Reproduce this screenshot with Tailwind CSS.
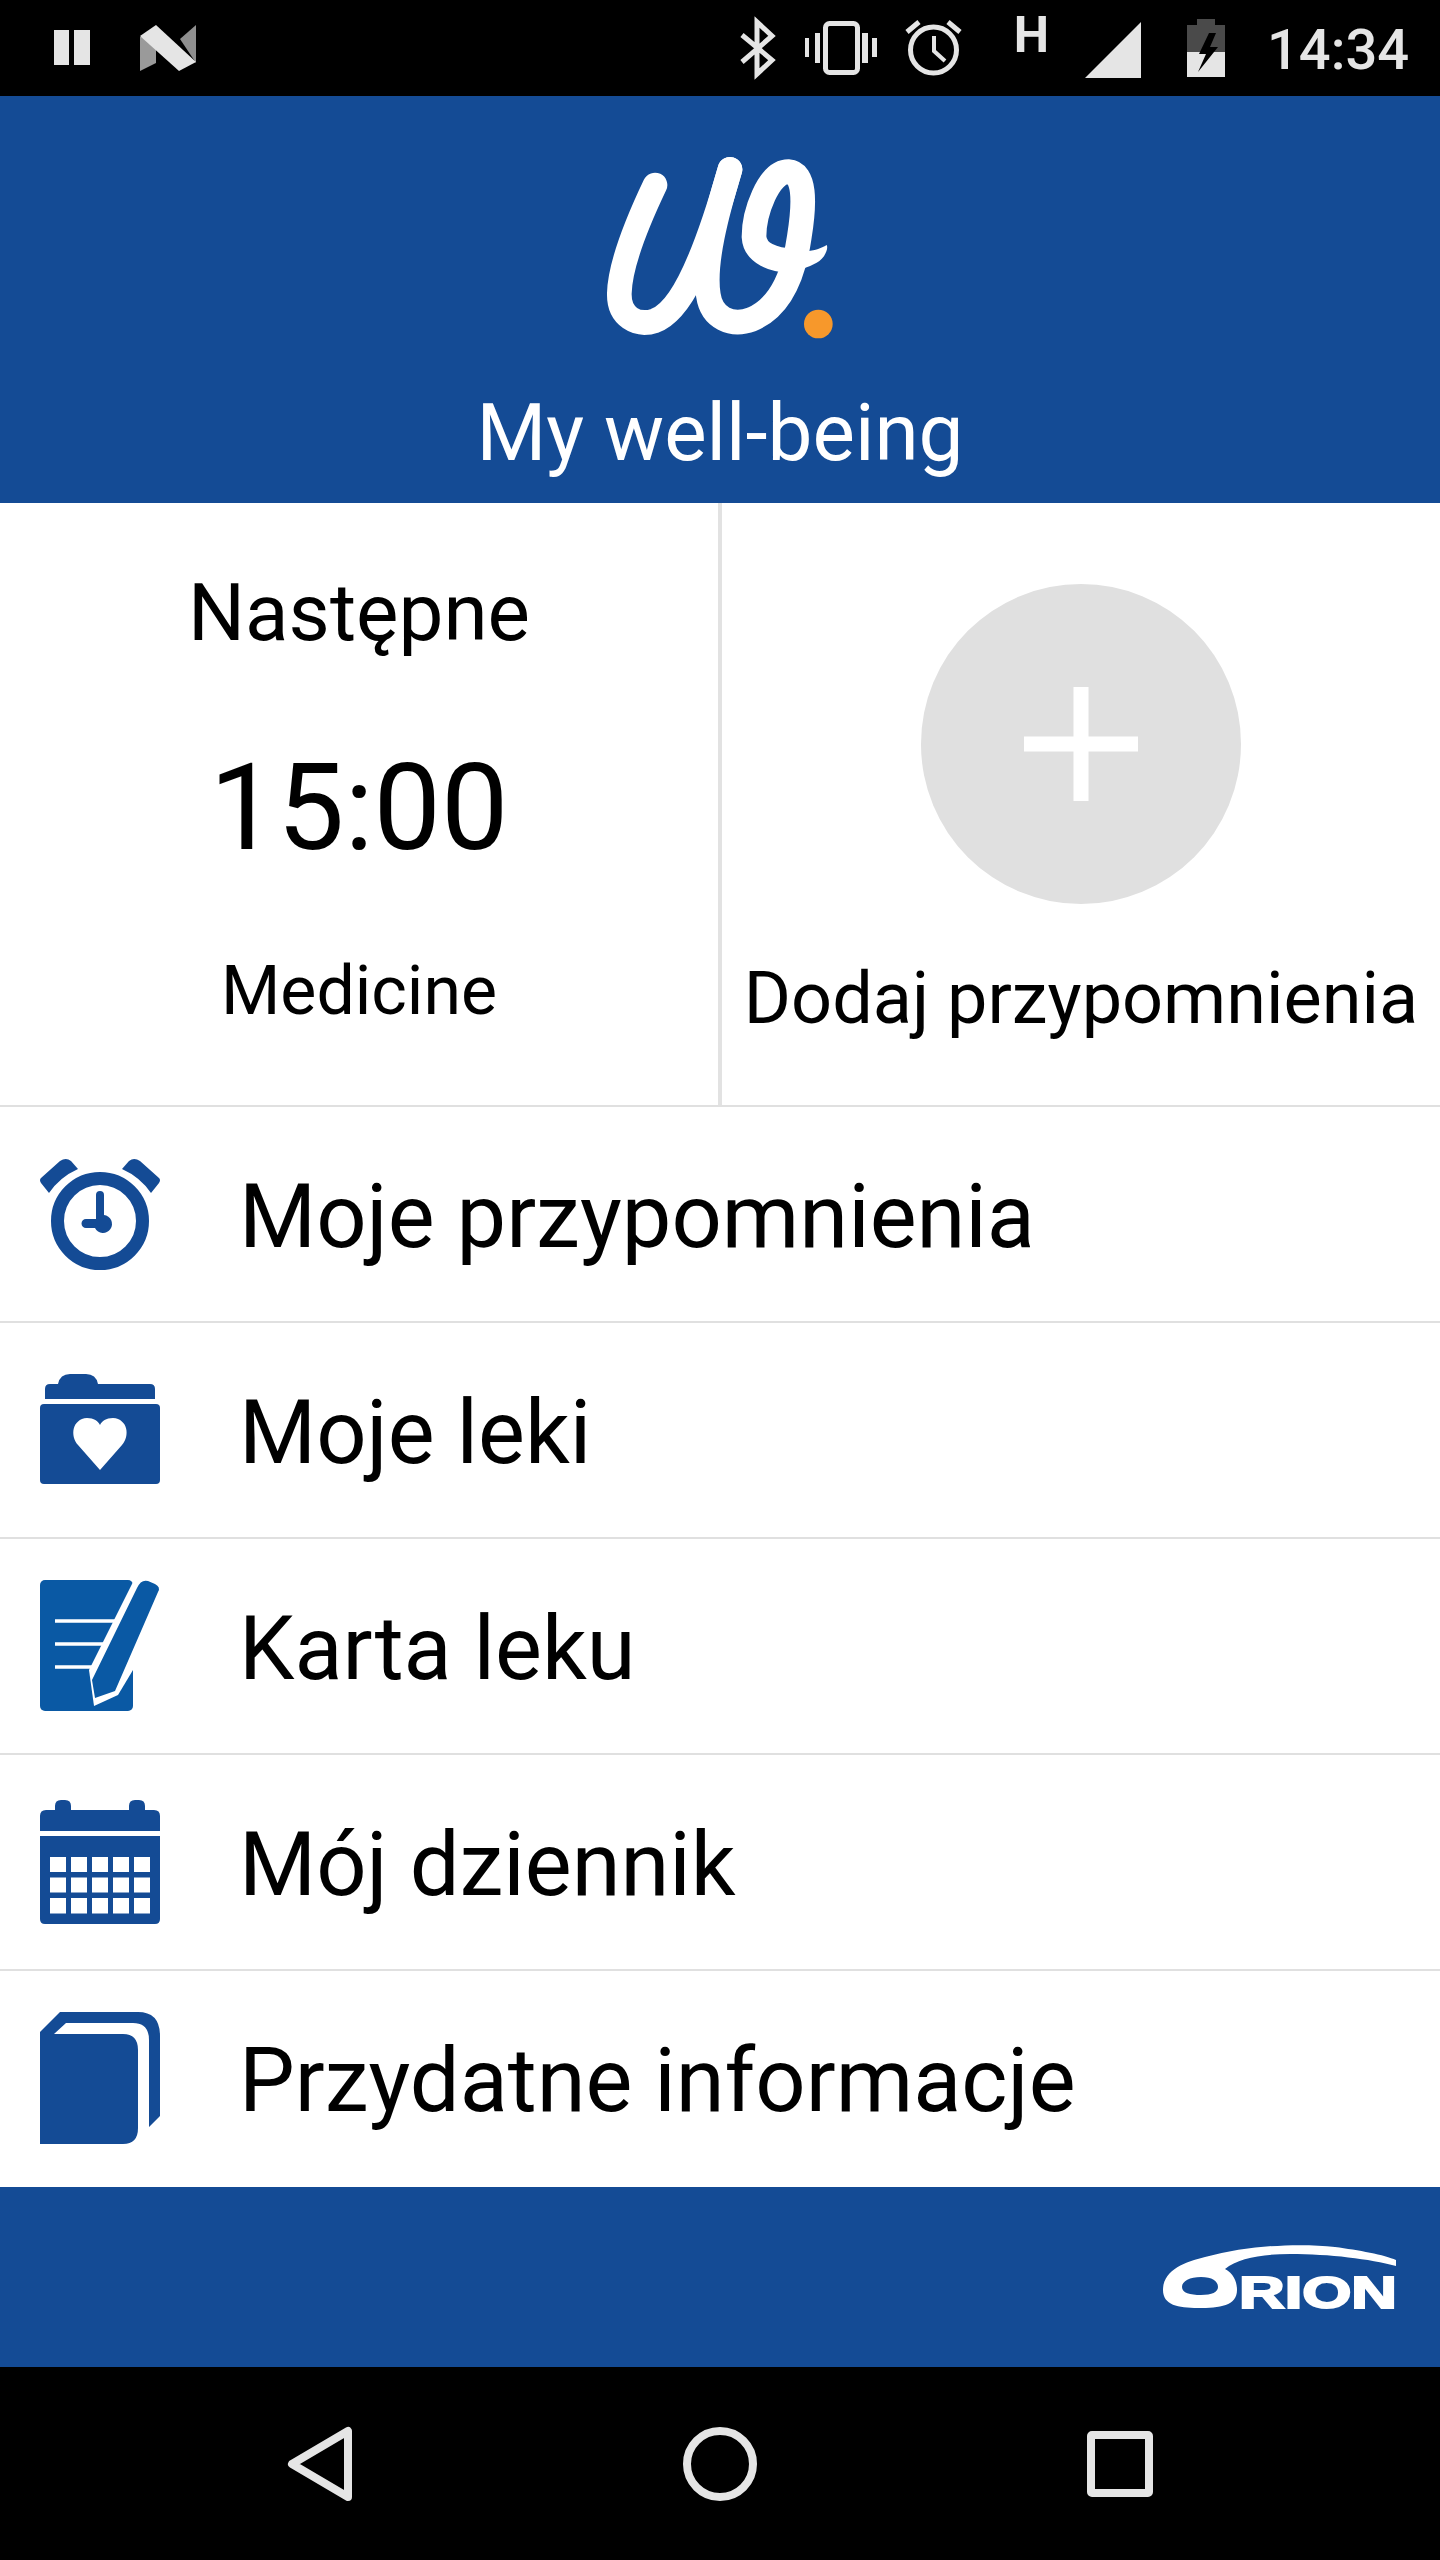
<!DOCTYPE html>
<html lang="pl">
<head>
<meta charset="utf-8">
<script src="https://cdn.jsdelivr.net/npm/@tailwindcss/browser@4"></script>
</head>
<body class="m-0 bg-white">
<div class="flex flex-col w-[1440px] h-[2560px] font-['Roboto',sans-serif] text-black">

  <!-- status bar -->
  <div class="h-[96px] bg-black flex items-start relative text-[#e5e5e5]">
    <svg class="absolute left-0 top-0" width="1440" height="96" viewBox="0 0 1440 96">
      <rect x="54" y="30" width="15" height="35" fill="#e5e5e5"/><rect x="74" y="30" width="16" height="35" fill="#e5e5e5"/>
      <path d="M140 37 L140 71 L156 63 L156 34Z" fill="#9a9a9a"/>
      <path d="M180 39 L196 25 L196 63Z" fill="#8f8f8f"/>
      <path d="M140 36 L156 25 L196 62 L179 71Z" fill="#e5e5e5"/>
      <g fill="none" stroke="#e5e5e5" stroke-width="5">
        <path d="M742 35 L772 60 L757 74 L757 22 L772 36 L742 62"/>
        <rect x="825.5" y="23.5" width="32" height="49" rx="4" stroke-width="5"/>
        <circle cx="933.5" cy="50" r="23"/>
        <path d="M934 36 V51 L945 61" stroke-width="4"/>
        <path d="M919 22 L907 32 M948 22 L960 32" stroke-width="5"/>
      </g>
      <g fill="#e5e5e5">
        <rect x="805" y="38" width="4" height="19"/><rect x="815" y="33" width="5" height="30"/>
        <rect x="862" y="33" width="6" height="30"/><rect x="872" y="38" width="5" height="19"/>
        <path d="M1085 78 L1141 22 V78Z"/>
      </g>
      <path d="M1197 19 H1215 V25 H1225 V52 H1187 V25 H1197Z" fill="#4a4a4a"/>
      <path d="M1187 52 H1225 V77 H1187Z" fill="#e5e5e5"/>
      <path d="M1209 33 L1199 54 H1206 L1198 72 L1218 47 H1210 L1216 33Z" fill="#000"/>
      <text x="1031.500" y="52" text-anchor="middle" font-family="Roboto, sans-serif" font-weight="700" font-size="50" fill="#e5e5e5">H</text>
    </svg>
    <div class="absolute left-[1267px] top-[20px] leading-[60px] text-[56px] font-medium whitespace-nowrap">14:34</div>
  </div>

  <!-- header -->
  <div class="h-[407px] bg-[#144b95] flex flex-col items-center text-white">
    <svg class="block mt-[34px] mr-[20px]" width="300" height="240" viewBox="0 0 900 720">
      <g fill="none" stroke="#fff" stroke-width="74" stroke-linecap="round" stroke-linejoin="round">
        <path d="M285 165 C235 270 180 400 178 490 C176 560 230 590 285 572 C360 545 430 400 510 118"/>
        <path d="M510 118 C470 250 430 400 445 495 C455 565 515 590 575 568 C655 535 700 445 718 320 C735 215 735 128 685 125 C625 125 582 250 582 320 C585 370 640 392 700 392"/>
      </g>
      <path d="M690 355 C740 372 775 360 800 345 C806 355 795 385 770 398 C745 412 715 420 690 428Z" fill="#fff"/>
      <circle cx="775" cy="582" r="43" fill="#f7982b"/>
    </svg>
    <div class="mt-[18px] text-[80px] leading-[90px] whitespace-nowrap">My well-being</div>
  </div>

  <!-- tiles -->
  <div class="h-[604px] grid grid-cols-[722px_718px] border-b-2 border-[#e0e0e0]">
    <div class="flex flex-col items-center border-r-4 border-[#e2e2e2]">
      <div class="mt-[60px] text-[80px] leading-[100px]">Następne</div>
      <div class="mt-[75px] text-[120px] leading-[140px]">15:00</div>
      <div class="mt-[68px] text-[68px] leading-[90px]">Medicine</div>
    </div>
    <div class="flex flex-col items-center">
      <div class="relative mt-[81px] w-[320px] h-[320px] rounded-full bg-[#e0e0e0] flex items-center justify-center">
        <svg width="114" height="114" viewBox="0 0 114 114"><path d="M49.500 0h15v49.500h49.500v15H64.500v49.500h-15V64.500H0v-15h49.500z" fill="#fff"/></svg>
      </div>
      <div class="mt-[45px] text-[72px] leading-[100px] whitespace-nowrap">Dodaj przypomnienia</div>
    </div>
  </div>

  <!-- menu -->
  <div class="flex flex-col">
    <div class="h-[216px] flex items-center border-b-2 border-[#e0e0e0]">
      <svg class="ml-[30px] shrink-0" width="140" height="160" viewBox="30 1134 140 160">
        <circle cx="100" cy="1221" r="42.5" fill="none" stroke="#144b95" stroke-width="13"/>
        <path d="M96 1195a4 4 0 0 1 8 0v20a9 9 0 1 1-9 13h-9a4.500 4.500 0 0 1 0-9h10z" fill="#144b95"/>
        <path d="M41 1178 L60 1161 Q66 1157 71 1161 L78 1169 Q60 1177 49 1193 L41 1183 Q39 1180 41 1178Z" fill="#144b95"/>
        <path d="M159 1178 L140 1161 Q134 1157 129 1161 L122 1169 Q140 1177 151 1193 L159 1183 Q161 1180 159 1178Z" fill="#144b95"/>
      </svg>
      <div class="ml-[69px] pt-[6px] text-[88.4px] leading-[100px] whitespace-nowrap">Moje przypomnienia</div>
    </div>
    <div class="h-[216px] flex items-center border-b-2 border-[#e0e0e0]">
      <svg class="ml-[30px] shrink-0" width="140" height="160" viewBox="30 1350 140 160">
        <path d="M45 1389 Q45 1384 50 1384 H58 Q60 1374 70 1374 H86 Q96 1374 98 1384 H150 Q155 1384 155 1389 V1399 H45Z" fill="#144b95"/>
        <path d="M44 1404 H156 Q160 1404 160 1408 V1480 Q160 1484 156 1484 H44 Q40 1484 40 1480 V1408 Q40 1404 44 1404Z" fill="#144b95"/>
        <path d="M100 1470 L78 1445 C70 1436 72 1419 87 1418 C94 1418 98 1421 100 1425 C102 1421 106 1418 113 1418 C128 1419 130 1436 122 1445Z" fill="#fff"/>
      </svg>
      <div class="ml-[69px] pt-[6px] text-[88.4px] leading-[100px] whitespace-nowrap">Moje leki</div>
    </div>
    <div class="h-[216px] flex items-center border-b-2 border-[#e0e0e0]">
      <svg class="ml-[30px] shrink-0" width="140" height="160" viewBox="30 1566 140 160">
        <rect x="40" y="1580" width="93" height="131" rx="5" fill="#0a59a4"/>
        <path d="M133 1582 L89 1670 L94 1706 L118 1695 L136 1665" fill="#fff"/>
        <path d="M55 1621 H118 M55 1644 H108 M55 1667 H97" stroke="#fff" stroke-width="3.500"/>
        <path d="M137 1588 Q141 1579 148 1581 L155 1584 Q161 1587 158 1592 L115 1691 L95 1698 L92 1680Z" fill="#0a59a4"/>
      </svg>
      <div class="ml-[69px] pt-[6px] text-[88.4px] leading-[100px] whitespace-nowrap">Karta leku</div>
    </div>
    <div class="h-[216px] flex items-center border-b-2 border-[#e0e0e0]">
      <svg class="ml-[30px] shrink-0" width="140" height="160" viewBox="30 1782 140 160">
        <path d="M40 1816 Q40 1810 46 1810 H55 V1806 Q55 1800 61 1800 H65 Q71 1800 71 1806 V1810 H129 V1806 Q129 1800 135 1800 H139 Q145 1800 145 1806 V1810 H154 Q160 1810 160 1816 V1831 H40Z" fill="#144b95"/>
        <path d="M40 1836 H160 V1919 Q160 1924 155 1924 H45 Q40 1924 40 1919Z" fill="#144b95"/>
        <g fill="#fff">
          <rect x="50" y="1857" width="16" height="15"/><rect x="71" y="1857" width="16" height="15"/><rect x="92" y="1857" width="16" height="15"/><rect x="113" y="1857" width="16" height="15"/><rect x="134" y="1857" width="16" height="15"/>
          <rect x="50" y="1877.500" width="16" height="15"/><rect x="71" y="1877.500" width="16" height="15"/><rect x="92" y="1877.500" width="16" height="15"/><rect x="113" y="1877.500" width="16" height="15"/><rect x="134" y="1877.500" width="16" height="15"/>
          <rect x="50" y="1898" width="16" height="15.500"/><rect x="71" y="1898" width="16" height="15.500"/><rect x="92" y="1898" width="16" height="15.500"/><rect x="113" y="1898" width="16" height="15.500"/><rect x="134" y="1898" width="16" height="15.500"/>
        </g>
      </svg>
      <div class="ml-[69px] pt-[6px] text-[88.4px] leading-[100px] whitespace-nowrap">Mój dziennik</div>
    </div>
    <div class="h-[216px] flex items-center border-b-2 border-white">
      <svg class="ml-[30px] shrink-0" width="140" height="160" viewBox="30 1998 140 160">
        <path d="M40 2032 L60 2012 H138 Q160 2012 160 2036 V2116 L149 2127 V2040 Q149 2023 133 2023 H66 L54 2034 H123 Q138 2034 138 2050 V2128 Q138 2144 123 2144 H40Z" fill="#144b95"/>
      </svg>
      <div class="ml-[69px] pt-[6px] text-[88.4px] leading-[100px] whitespace-nowrap">Przydatne informacje</div>
    </div>
  </div>

  <!-- footer -->
  <div class="h-[180px] bg-[#144b95] flex justify-end items-start">
    <svg class="mt-[54px] mr-[40px] block" width="240" height="70" viewBox="1160 2241 240 70">
      <path fill-rule="evenodd" fill="#fff" d="M1163 2290 C1163 2270 1185 2262 1205 2257 C1250 2245 1300 2243 1335 2247 C1358 2250 1385 2255 1396 2260 L1396 2266 C1370 2259 1330 2254 1290 2254 C1262 2254 1238 2258 1225 2269 C1234 2274 1237 2282 1237 2290 C1237 2306 1220 2308 1198 2308 C1178 2308 1163 2305 1163 2290Z M1182 2287 C1182 2293 1190 2295 1201 2295 C1212 2295 1218 2292 1218 2287 C1218 2281 1212 2277 1201 2277 C1190 2277 1182 2281 1182 2287Z"/>
      <text x="1239" y="2308" textLength="158" lengthAdjust="spacingAndGlyphs" font-family="'Liberation Sans', sans-serif" font-weight="700" font-size="44" fill="#fff" stroke="#fff" stroke-width="2">RION</text>
    </svg>
  </div>

  <!-- nav bar -->
  <div class="flex-1 bg-black relative">
    <svg class="absolute left-0 top-0" width="1440" height="193" viewBox="0 2367 1440 193">
      <path d="M348 2431 V2497 L292 2464Z" fill="none" stroke="#e5e5e5" stroke-width="8" stroke-linejoin="round"/>
      <circle cx="720" cy="2464" r="33" fill="none" stroke="#e5e5e5" stroke-width="8"/>
      <rect x="1091" y="2435" width="58" height="58" rx="1" fill="none" stroke="#e5e5e5" stroke-width="8"/>
    </svg>
  </div>
</div>
</body>
</html>
